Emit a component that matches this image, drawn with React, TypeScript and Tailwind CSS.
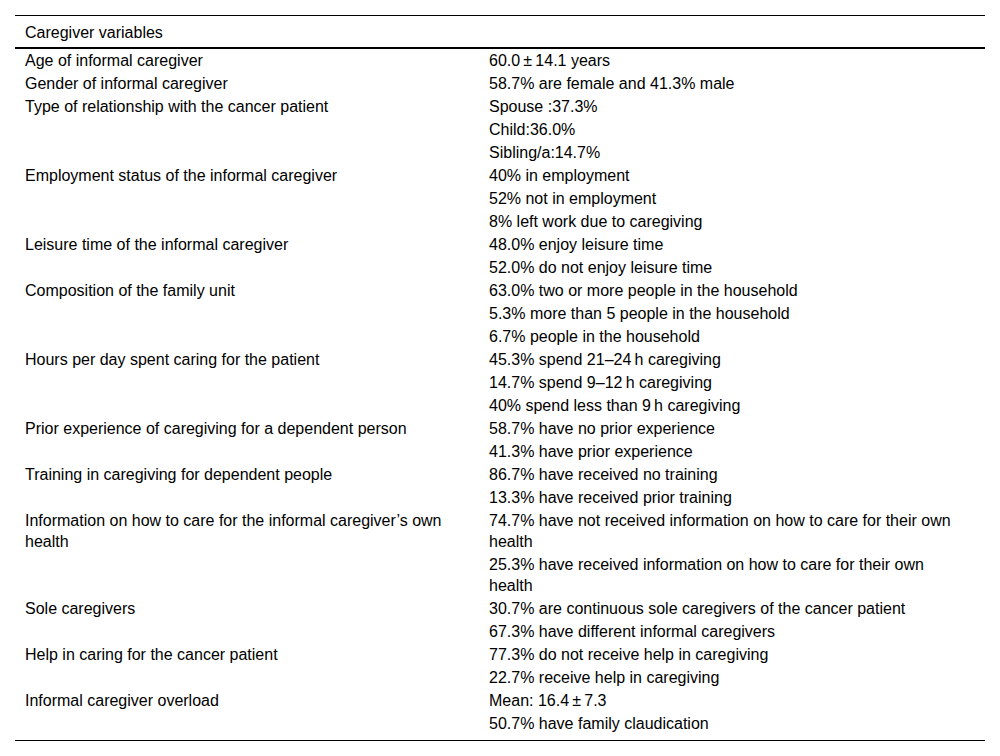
const rows: [string, string[]][] = [
  ['Age of informal caregiver', ['60.0\u2009±\u200914.1 years']],
  ['Gender of informal caregiver', ['58.7% are female and 41.3% male']],
  ['Type of relationship with the cancer patient', ['Spouse :37.3%', 'Child:36.0%', 'Sibling/a:14.7%']],
  ['Employment status of the informal caregiver', ['40% in employment', '52% not in employment', '8% left work due to caregiving']],
  ['Leisure time of the informal caregiver', ['48.0% enjoy leisure time', '52.0% do not enjoy leisure time']],
  ['Composition of the family unit', ['63.0% two or more people in the household', '5.3% more than 5 people in the household', '6.7% people in the household']],
  ['Hours per day spent caring for the patient', ['45.3% spend 21\u201324\u2009h caregiving', '14.7% spend 9\u201312\u2009h caregiving', '40% spend less than 9\u2009h caregiving']],
  ['Prior experience of caregiving for a dependent person', ['58.7% have no prior experience', '41.3% have prior experience']],
  ['Training in caregiving for dependent people', ['86.7% have received no training', '13.3% have received prior training']],
  ['Information on how to care for the informal caregiver\u2019s own health', ['74.7% have not received information on how to care for their own health', '25.3% have received information on how to care for their own health']],
  ['Sole caregivers', ['30.7% are continuous sole caregivers of the cancer patient', '67.3% have different informal caregivers']],
  ['Help in caring for the cancer patient', ['77.3% do not receive help in caregiving', '22.7% receive help in caregiving']],
  ['Informal caregiver overload', ['Mean: 16.4\u2009±\u20097.3', '50.7% have family claudication']],
];

export default function App() {
  return (
    <div className="bg-white min-h-[756px] pt-[15px] px-[15px] text-black text-[16px] leading-[21px] font-['Liberation_Sans',Arial,sans-serif]">
      <div className="border-t border-b border-black pb-[5px]">
        <div className="border-b-2 border-black px-[10px] pt-[6px] pb-[4px]">Caregiver variables</div>
        {rows.map(([label, values]) => (
          <div key={label} className="grid grid-cols-[464px_1fr]">
            <div className="pl-[10px] pr-[10px] py-[1px]">{label}</div>
            <div className="flex flex-col">
              {values.map((v) => (
                <div key={v} className="pl-[10px] pr-[24px] py-[1px]">{v}</div>
              ))}
            </div>
          </div>
        ))}
      </div>
    </div>
  );
}
